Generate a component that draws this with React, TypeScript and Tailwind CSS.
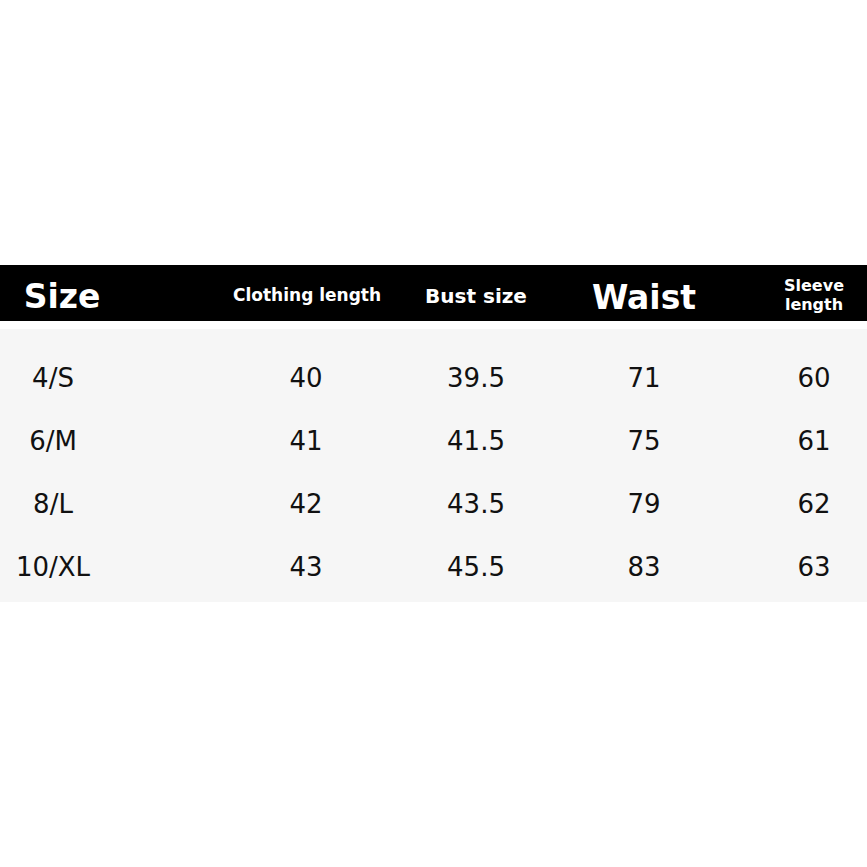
export default function App() {
  const rows = [
    ["4/S", "40", "39.5", "71", "60"],
    ["6/M", "41", "41.5", "75", "61"],
    ["8/L", "42", "43.5", "79", "62"],
    ["10/XL", "43", "45.5", "83", "63"],
  ];
  const font = { fontFamily: '"DejaVu Sans", "Noto Sans", sans-serif' };
  return (
    <div className="w-[867px] h-[867px] bg-white overflow-hidden" style={font}>
      <div className="h-[265px]" />
      <div className="h-[56px] bg-black text-white font-bold flex items-center">
        <div className="shrink-0 w-[124px] text-center text-[33px] leading-none pt-[7px]">Size</div>
        <div className="shrink-0 ml-[112px] w-[140px] text-center text-[17px] leading-none whitespace-nowrap pt-[5px] -translate-x-[3px]">Clothing length</div>
        <div className="shrink-0 ml-[30px] w-[140px] text-center text-[20px] leading-none whitespace-nowrap pt-[6px]">Bust size</div>
        <div className="shrink-0 ml-[28px] w-[140px] text-center text-[33px] leading-none pt-[9px]">Waist</div>
        <div className="shrink-0 ml-[50px] w-[100px] text-center text-[16px] leading-[19px] pt-[4px]">
          <div>Sleeve</div>
          <div>length</div>
        </div>
      </div>
      <div className="h-[8px]" />
      <div className="h-[273px] bg-[#f6f6f6] pt-[17px]">
        {rows.map((r) => (
          <div key={r[0]} className="h-[63px] flex items-center text-[26px] text-[#111] leading-none">
            <div className="shrink-0 w-[106px] text-center">{r[0]}</div>
            <div className="shrink-0 ml-[130px] w-[140px] text-center">{r[1]}</div>
            <div className="shrink-0 ml-[30px] w-[140px] text-center">{r[2]}</div>
            <div className="shrink-0 ml-[28px] w-[140px] text-center">{r[3]}</div>
            <div className="shrink-0 ml-[50px] w-[100px] text-center">{r[4]}</div>
          </div>
        ))}
      </div>
    </div>
  );
}
